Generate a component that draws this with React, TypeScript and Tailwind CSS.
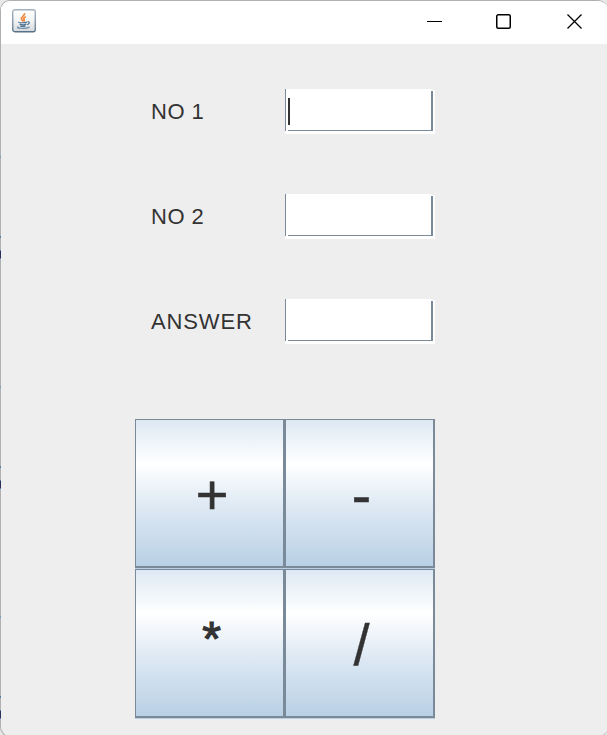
import React from "react";

function JavaIcon() {
  return (
    <svg width="24" height="24" viewBox="0 0 24 24" fill="none">
      <defs>
        <linearGradient id="tile" x1="0" y1="0" x2="0" y2="1">
          <stop offset="0" stopColor="#ffffff" />
          <stop offset="0.45" stopColor="#f4f5f6" />
          <stop offset="1" stopColor="#d5dade" />
        </linearGradient>
        <linearGradient id="rim" x1="0" y1="0" x2="0" y2="1">
          <stop offset="0" stopColor="#a3b2c0" />
          <stop offset="1" stopColor="#587187" />
        </linearGradient>
      </defs>
      <rect x="0.75" y="0.75" width="22.5" height="22" rx="2" fill="url(#tile)" stroke="url(#rim)" strokeWidth="1.3" />
      <path d="M12.600 4.200c.8 2.200-4 3.500-3.100 5.800.4.900 1.200 1.300 1.400 2.400M13.800 7.600c-2.400 1.200-2.600 2-1.600 3 .4.600 0 1.200-.6 1.700" stroke="#ed8133" strokeWidth="1.6" />
      <path d="M7 13c-1.800.8 5.700 1.100 7.900.1M7.700 15.100c1.600.7 4.800.7 6.600 0M8.200 16.900c1.500.6 3.900.6 5.300 0M15.500 12.900c2.600-.6 2.200 2-.3 2.900" stroke="#4f7391" strokeWidth="1.2" />
      <path d="M6.500 17.700c-4.200 1.300 6.200 2.700 11 .4" stroke="#6c8ba5" strokeWidth="1.2" />
    </svg>
  );
}

function TitleBar() {
  return (
    <header className="flex h-[43px] items-start justify-between bg-white pl-[11px] pr-[25px]">
      <div className="mt-[8px]">
        <JavaIcon />
      </div>
      <div className="mt-[12px] flex">
        <svg width="16" height="16" viewBox="0 0 16 16">
          <path d="M1 8.500h15" stroke="#000" />
        </svg>
        <svg width="16" height="16" viewBox="0 0 16 16" className="ml-[54px]">
          <rect x="0.75" y="1.750" width="13.500" height="13.500" rx="1.500" fill="none" stroke="#000" strokeWidth="1.500" />
        </svg>
        <svg width="16" height="16" viewBox="0 0 16 16" className="ml-[55px]">
          <path d="M.5 1.500l14 14M14.500 1.500l-14 14" stroke="#000" strokeWidth="1.300" />
        </svg>
      </div>
    </header>
  );
}

function Field({ label, tracking, focused = false }: { label: string; tracking: string; focused?: boolean }) {
  return (
    <div className="flex h-[45px] items-center">
      <label className={`w-[134px] whitespace-pre text-[22px] leading-[45px] text-[#333333] ${tracking}`}>{label}</label>
      <div className="relative h-[45px] w-[150px] bg-white">
        <span className="absolute left-0 top-0 h-[42px] w-px bg-[#7a8a99]" />
        <span className="absolute bottom-[3px] left-[3px] right-[2px] h-px bg-[#7a8a99]" />
        <span className="absolute right-[2px] top-[2px] h-10 w-[2px] bg-[#7a8a99]" />
        <span className="absolute right-0 top-0 h-px w-[3px] bg-[#eeeeee]" />
        {focused && <span className="absolute left-[3px] top-[9px] h-[27px] w-[2px] bg-[#333333]" />}
      </div>
    </div>
  );
}

function OpButton({ children, glyph }: { children: React.ReactNode; glyph: string }) {
  return (
    <div className="h-[150px] w-[150px] bg-[#b8cfe5] pb-px">
      <button className="flex h-[149px] w-[150px] items-center justify-center border-b-2 border-l border-r-2 border-t border-[#7a8a99] bg-[linear-gradient(to_bottom,#dde8f3_0%,#ffffff_30%,#dde8f3_60%,#b8cfe5_100%)] bg-origin-border leading-none text-[#333333]">
        <span className={`block ${glyph}`}>{children}</span>
      </button>
    </div>
  );
}

function EdgeMarks() {
  const marks = [156, 386, 616];
  return (
    <>
      {marks.map((y) => (
        <React.Fragment key={y}>
          <span className="absolute left-0 h-[2px] w-px bg-[#7aa0b4]" style={{ top: y }} />
          <span className="absolute left-0 h-[2px] w-px bg-[#5580ab]" style={{ top: y + 80 }} />
          <span className="absolute left-0 h-[9px] w-px border-y border-[#5580ab] bg-[#302c5c]" style={{ top: y + 94 }} />
          <span className="absolute left-0 h-[7px] w-px bg-[#302c5c]" style={{ top: y + 95 }} />
        </React.Fragment>
      ))}
    </>
  );
}

export default function App() {
  return (
    <div className="relative h-[735px] w-[607px] overflow-hidden bg-[#e9e9e9] font-['Liberation_Sans',Arial,sans-serif]">
      <div className="h-[737px] w-[608px] overflow-hidden rounded-[10px] border border-r-0 border-[#b0b0b0] bg-[#eeeeee]">
        <TitleBar />
        <main className="pt-[45px]">
          <section className="flex flex-col gap-[60px] pl-[150px]">
            <Field label="NO 1" tracking="tracking-[0.5px]" focused />
            <Field label="NO 2" tracking="tracking-[0.5px]" />
            <Field label="ANSWER" tracking="tracking-[0.85px]" />
          </section>
          <section className="ml-[134px] mt-[75px] grid w-[300px] grid-cols-2">
            <OpButton glyph="mt-[3px] pl-[5px] text-[56px] [-webkit-text-stroke:0.6px_#333333]">+</OpButton>
            <OpButton glyph="mt-[3px] pl-[4px] text-[58px] [-webkit-text-stroke:0.6px_#333333]">-</OpButton>
            <OpButton glyph="-mt-[8px] pl-[4px] text-[48px] [-webkit-text-stroke:1.2px_#333333]">*</OpButton>
            <OpButton glyph="mt-[3px] pl-[4px] text-[58px] [-webkit-text-stroke:0.3px_#333333]">/</OpButton>
          </section>
        </main>
      </div>
      <EdgeMarks />
    </div>
  );
}
